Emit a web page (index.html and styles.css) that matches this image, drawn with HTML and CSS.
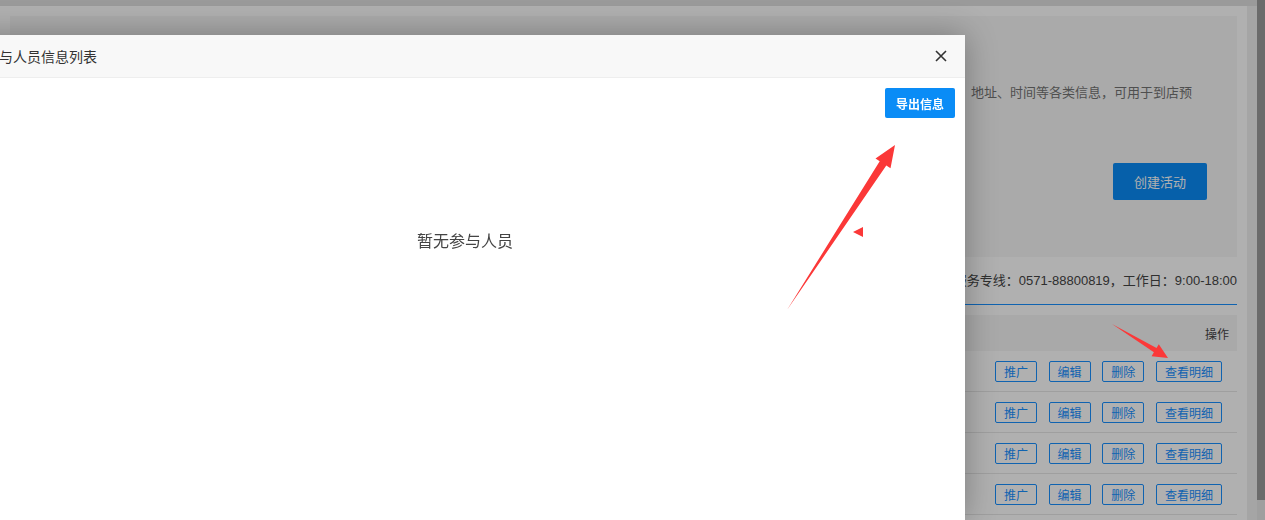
FILE: index.html
```html
<!DOCTYPE html>
<html lang="zh-CN">
<head>
<meta charset="utf-8">
<title>活动管理</title>
<link rel="stylesheet" href="styles.css">
</head>
<body>
<div class="app">
  <div class="page">
    <div class="topbar"></div>
    <div class="main">
      <div class="content">
        <section class="intro">
          <p class="intro-desc">活动支持设置名称、地址、时间等各类信息，可用于到店预</p>
          <button class="btn-create">创建活动</button>
        </section>
        <div class="tabbar">
          <div class="tabs"><span class="tab">全部活动</span></div>
          <div class="hotline">如有疑问请联系客服，服务专线：0571-88800819，工作日：9:00-18:00</div>
        </div>
        <div class="list">
          <div class="list-head">
            <div class="cell-name">活动名称</div>
            <div class="cell-time">活动时间</div>
            <div class="head-ops">操作</div>
          </div>
          <div class="list-row">
            <div class="cell-name"></div><div class="cell-time"></div>
            <div class="cell-ops"><button class="op">推广</button><button class="op">编辑</button><button class="op">删除</button><button class="op">查看明细</button></div>
          </div>
          <div class="list-row">
            <div class="cell-name"></div><div class="cell-time"></div>
            <div class="cell-ops"><button class="op">推广</button><button class="op">编辑</button><button class="op">删除</button><button class="op">查看明细</button></div>
          </div>
          <div class="list-row">
            <div class="cell-name"></div><div class="cell-time"></div>
            <div class="cell-ops"><button class="op">推广</button><button class="op">编辑</button><button class="op">删除</button><button class="op">查看明细</button></div>
          </div>
          <div class="list-row">
            <div class="cell-name"></div><div class="cell-time"></div>
            <div class="cell-ops"><button class="op">推广</button><button class="op">编辑</button><button class="op">删除</button><button class="op">查看明细</button></div>
          </div>
          <div class="list-row">
            <div class="cell-name"></div><div class="cell-time"></div>
            <div class="cell-ops"><button class="op">推广</button><button class="op">编辑</button><button class="op">删除</button><button class="op">查看明细</button></div>
          </div>
        </div>
      </div>
    </div>
  </div>
  <div class="scrollbar"><div class="thumb"></div></div>
</div>

<div class="mask"></div>

<div class="modal">
  <div class="modal-head">
    <span class="modal-title">参与人员信息列表</span>
    <svg class="close" width="12" height="12" viewBox="0 0 12 12"><path d="M1 1L11 11M11 1L1 11" stroke="#333" stroke-width="1.6" fill="none"/></svg>
  </div>
  <div class="modal-body">
    <div class="toolbar"><button class="btn-export">导出信息</button></div>
    <p class="empty">暂无参与人员</p>
  </div>
</div>

<svg class="marks" width="1265" height="520" viewBox="0 0 1265 520">
  <polygon points="787,310 879.7,161.2 875.5,158.5 895,145 890.5,168.3 886.3,165.6" fill="#fb3838"/>
  <polygon points="853,232 863,227 863,237" fill="#fb3838"/>
  <polygon points="1112,324 1156.5,348.1 1158.8,344.2 1168,358 1151.6,356.2 1153.9,352.3" fill="#fb3838"/>
</svg>
</body>
</html>
```

FILE: styles.css
```css
* { box-sizing: border-box; margin: 0; padding: 0; }
html, body { height: 100%; }
body {
  font-family: "Noto Sans CJK SC", "Noto Sans", sans-serif;
  color: #333;
  background: #f0f0f0;
  overflow: hidden;
  position: relative;
}
button { font-family: inherit; cursor: pointer; }

.app { display: flex; height: 520px; overflow: hidden; }
.page { flex: 1; display: flex; flex-direction: column; background: #f0f0f0; }
.topbar { height: 6px; background: #e0e0e0; flex: none; }
.main { flex: 1; padding-right: 10px; }
.content { background: #fff; height: 100%; padding: 10px; }

.intro {
  height: 241px;
  background: #f7f7f7;
  padding: 0 30px;
  display: flex;
  flex-direction: column;
  align-items: flex-end;
}
.intro-desc {
  margin-top: 65px;
  padding-right: 15px;
  font-size: 13px;
  line-height: 22px;
  color: #737373;
  white-space: nowrap;
}
.btn-create {
  margin-top: 60px;
  width: 94px;
  height: 37px;
  border: 0;
  border-radius: 2px;
  background: #0a8cf6;
  color: #fff;
  font-size: 13px;
}

.tabbar {
  display: flex;
  justify-content: space-between;
  padding: 14px 0 13px;
  border-bottom: 1px solid #1890ff;
  font-size: 13px;
  line-height: 20px;
}
.tab { color: #1890ff; }
.hotline {
  color: #444;
  white-space: nowrap;
  font-family: "Liberation Sans", "Noto Sans CJK SC", sans-serif;
}

.list { margin-top: 10px; font-size: 12px; }
.list-head {
  display: flex;
  align-items: center;
  height: 36px;
  background: #f5f5f5;
  color: #444;
}
.list-row {
  display: flex;
  align-items: center;
  height: 41px;
  border-bottom: 1px solid #e6e6e6;
}
.cell-name { flex: 1; padding-left: 10px; }
.cell-time { width: 240px; }
.head-ops { width: 300px; text-align: right; padding-right: 8px; }
.cell-ops {
  width: 300px;
  display: flex;
  justify-content: flex-end;
  gap: 11.7px;
  padding-right: 15px;
}
.op {
  height: 21px;
  padding: 0 8px;
  border: 1px solid #1890ff;
  border-radius: 2px;
  background: #fff;
  color: #1890ff;
  font-size: 12px;
  line-height: 19px;
}

.scrollbar { width: 8px; background: #e6e6e6; flex: none; }
.thumb { height: 500px; background: #9c9c9c; }

.mask {
  position: fixed;
  inset: 0;
  background: rgba(0, 0, 0, 0.31);
  z-index: 10;
}

.modal {
  position: absolute;
  left: -35px;
  top: 35px;
  width: 1000px;
  height: 485px;
  background: #fff;
  box-shadow: 0 0 30px rgba(0, 0, 0, 0.3);
  z-index: 20;
  display: flex;
  flex-direction: column;
}
.modal-head {
  height: 43px;
  flex: none;
  background: #f8f8f8;
  border-bottom: 1px solid #eee;
  display: flex;
  align-items: center;
  justify-content: space-between;
  padding: 0 18px 0 20px;
}
.modal-title { font-size: 14px; color: #333; }
.close { display: block; }
.modal-body { padding: 10px; }
.toolbar { display: flex; justify-content: flex-end; }
.btn-export {
  width: 70px;
  height: 30px;
  border: 0;
  border-radius: 2px;
  background: #0a8cf6;
  color: #fff;
  font-size: 12px;
  font-weight: bold;
}
.empty {
  margin-top: 110px;
  text-align: center;
  font-size: 16px;
  line-height: 24px;
  color: #444;
}

.marks {
  position: absolute;
  left: 0;
  top: 0;
  z-index: 30;
  pointer-events: none;
}
```
